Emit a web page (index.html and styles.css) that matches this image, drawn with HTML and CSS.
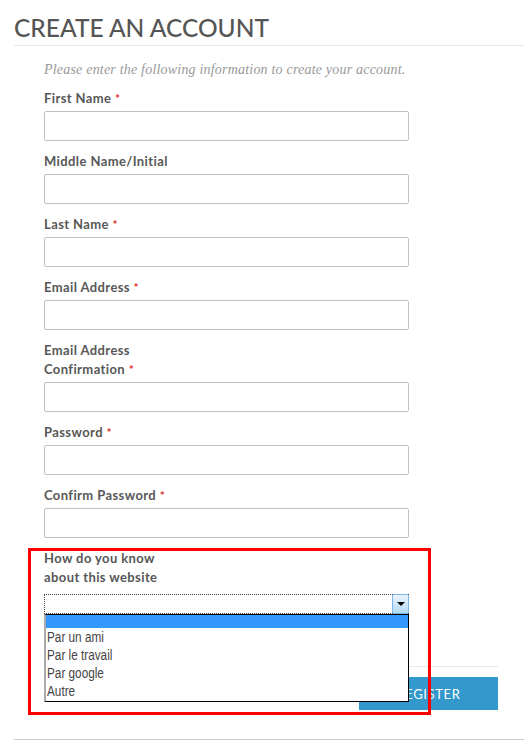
FILE: index.html
```html
<!DOCTYPE html>
<html>
<head>
  <title>Create an Account</title>
  <link rel="stylesheet" href="styles.css">
</head>
<body>

  <h1 class="page-title">CREATE AN ACCOUNT</h1>

  <form class="account-form">
    <p class="intro">Please enter the following information to create your account.</p>

    <div class="field">
      <label>First Name <span class="req">*</span></label>
      <input type="text" />
    </div>

    <div class="field">
      <label>Middle Name/Initial</label>
      <input type="text" />
    </div>

    <div class="field">
      <label>Last Name <span class="req">*</span></label>
      <input type="text" />
    </div>

    <div class="field">
      <label>Email Address <span class="req">*</span></label>
      <input type="email" />
    </div>

    <div class="field">
      <label>Email Address<br>Confirmation <span class="req">*</span></label>
      <input type="email" />
    </div>

    <div class="field">
      <label>Password <span class="req">*</span></label>
      <input type="password" />
    </div>

    <div class="field">
      <label>Confirm Password <span class="req">*</span></label>
      <input type="password" />
    </div>

    <div class="field select-field">
      <label>How do you know<br>about this website</label>
      <div class="select-box">
        <span class="select-btn"><span class="arrow"></span></span>
        <ul class="select-list">
          <li class="active"></li>
          <li><span>Par un ami</span></li>
          <li><span>Par le travail</span></li>
          <li><span>Par google</span></li>
          <li><span>Autre</span></li>
        </ul>
      </div>
      <div class="highlight"></div>
    </div>

    <div class="actions">
      <button type="submit">REGISTER</button>
    </div>
  </form>

  <div class="footer-line"></div>

</body>
</html>
```

FILE: styles.css
```css
body {
  margin: 0;
  font-family: 'Lato', sans-serif;
  color: #555;
  background: white;
}

.page-title {
  margin: 0 0 0 14px;
  padding: 13px 0 2px;
  font-size: 24.5px;
  line-height: 30px;
  font-weight: 500;
  color: #555;
  border-bottom: 1px solid #e8e8e8;
}

.account-form {
  padding: 0 26px 0 44px;
}

.intro {
  margin: 14px 0 9px;
  font-family: 'Liberation Serif', serif;
  font-style: italic;
  font-size: 14px;
  letter-spacing: 0.2px;
  line-height: 20px;
  color: #999;
}

.field {
  margin-bottom: 11px;
  position: relative;
}

label {
  display: block;
  font-size: 13px;
  font-weight: bold;
  letter-spacing: 0.4px;
  line-height: 19px;
  margin-bottom: 3px;
  color: #575757;
}

.req {
  color: #e02b27;
  font-size: 12px;
}

input {
  display: block;
  box-sizing: border-box;
  width: 365px;
  height: 30px;
  margin: 0;
  border: 1px solid #c2c2c2;
  border-radius: 2px;
  background: white;
}

.select-field label {
  margin-bottom: 7px;
}

.select-box {
  position: relative;
  box-sizing: border-box;
  width: 365px;
  height: 20px;
  border: 1px dotted #444;
  border-right: none;
  background: white;
}

.select-btn {
  position: absolute;
  top: -1px;
  right: 0;
  box-sizing: border-box;
  width: 17px;
  height: 20px;
  border: 1px solid #7eb4ea;
  border-radius: 2px;
  background: linear-gradient(to bottom, #eaf5fd, #b3dbf6);
  display: flex;
  align-items: center;
  justify-content: center;
}

.arrow {
  width: 0;
  height: 0;
  border-left: 4px solid transparent;
  border-right: 4px solid transparent;
  border-top: 4px solid #000;
}

.select-list {
  position: absolute;
  top: 19px;
  left: -1px;
  z-index: 2;
  box-sizing: border-box;
  width: 365px;
  height: 88px;
  margin: 0;
  padding: 0;
  list-style: none;
  background: white;
  border: 1px solid #000;
  border-left: 2px solid #aaa;
  font-family: 'Liberation Sans', sans-serif;
  font-size: 14px;
  color: #444;
}

.select-list li {
  height: 18px;
  line-height: 18px;
  padding-left: 1px;
}

.select-list li span {
  display: inline-block;
  transform: scaleX(0.84);
  transform-origin: left center;
}

.select-list li.active {
  height: 13px;
  background: #3399ff;
}

.highlight {
  position: absolute;
  left: -16px;
  top: -1px;
  width: 397px;
  height: 161px;
  border: 3px solid #f00;
  z-index: 3;
}

.actions {
  margin-top: 52px;
  padding-top: 10px;
  border-top: 1px solid #e8e8e8;
  display: flex;
  justify-content: flex-end;
}

button {
  width: 139px;
  height: 33px;
  border: none;
  background-color: #3399cc;
  color: white;
  font-family: 'Lato', sans-serif;
  font-size: 13px;
  letter-spacing: 0.6px;
  cursor: pointer;
}

.footer-line {
  margin: 29px 0 0 14px;
  border-top: 1px solid #ccc;
}
```
